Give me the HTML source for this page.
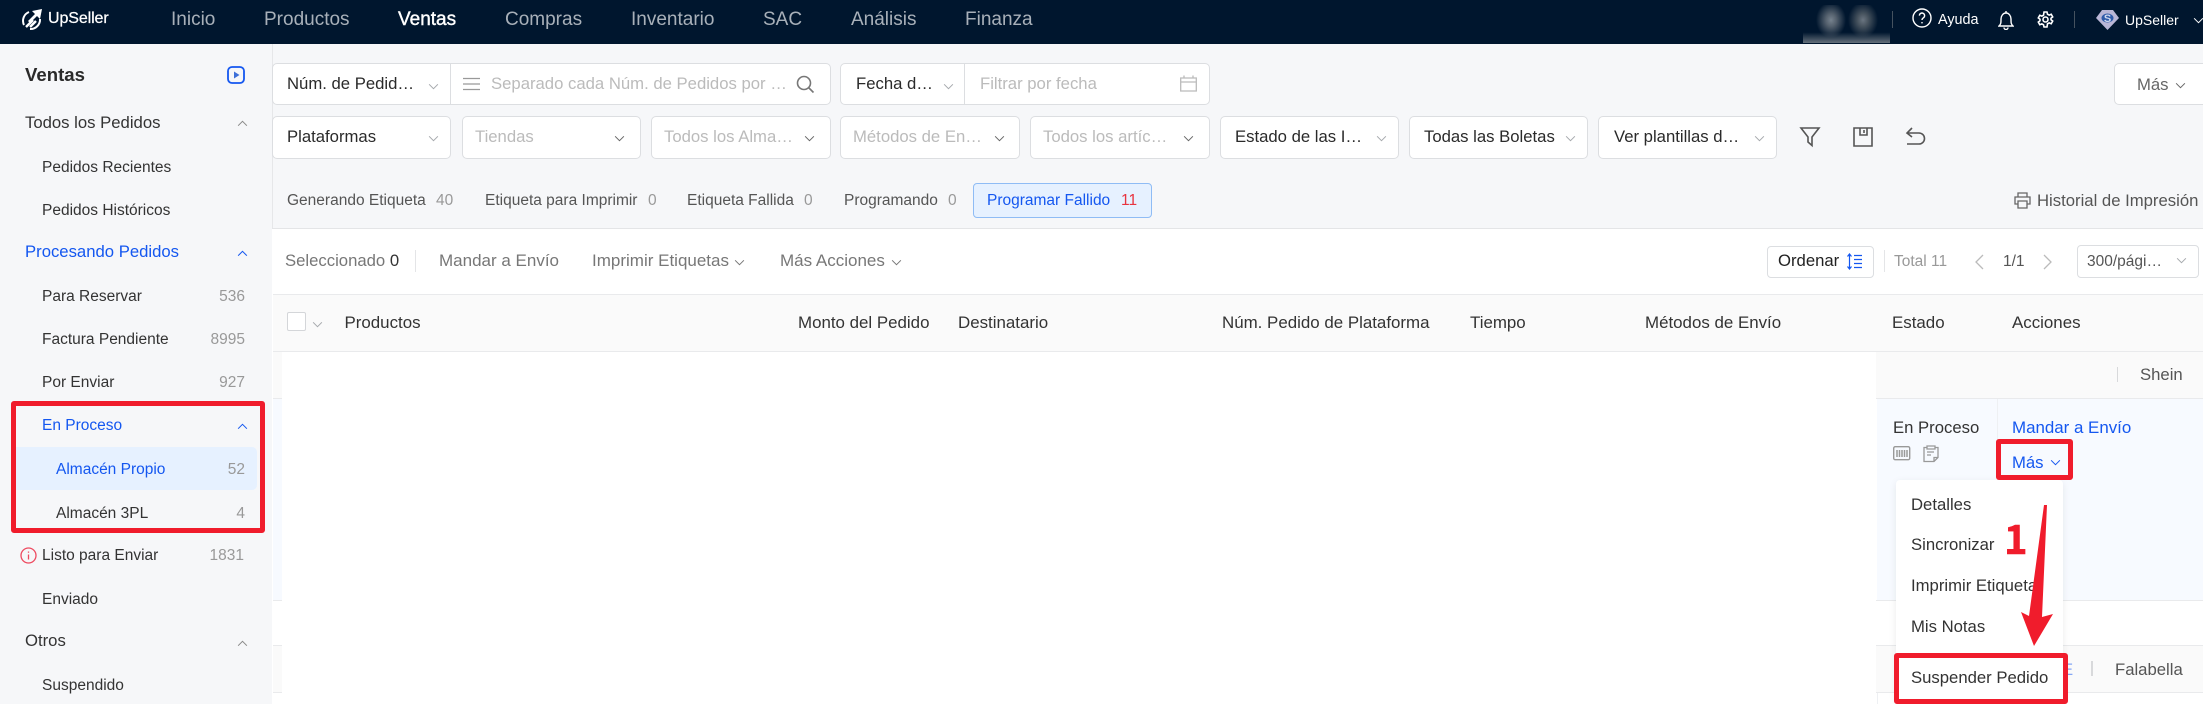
<!DOCTYPE html>
<html lang="es"><head><meta charset="utf-8"><title>UpSeller</title>
<style>
html,body{margin:0;padding:0;width:2203px;height:704px;overflow:hidden;background:#f6f7f9}
body{position:relative;font-family:"Liberation Sans",Arial,sans-serif;font-size:15.5px;color:#333}
div,svg,span.a{position:absolute}
.t{line-height:20px;height:20px;white-space:nowrap;margin-top:1px}
.f{font-size:16.7px}
.g{color:#999}.b{color:#1457f0}.d{color:#555}.p{color:#bbb}
.n{color:#a8b0b9;font-size:19px;line-height:24px;height:24px;top:8px;white-space:nowrap;position:absolute}
.w{color:#fff}
.box{background:#fff;border:1px solid #dcdee1;border-radius:5px;box-sizing:border-box}
.ln{height:1px;background:#e9eaec}
.c{fill:none;stroke:#a6a9ad;stroke-width:1.2;width:11px;height:7px;overflow:visible}
.i{fill:none;stroke:#555;stroke-width:1.6;overflow:visible}
</style></head><body>
<svg width="0" height="0" style="left:0;top:0"><defs><symbol id="ch" viewBox="0 0 12 8"><path d="M1 1.500 6 6.500 11 1.500"/></symbol><symbol id="up" viewBox="0 0 12 8"><path d="M1 6.500 6 1.500 11 6.500"/></symbol></defs></svg>

<!-- top bar -->
<div style="left:0;top:0;width:2203px;height:44px;background:#00162e"></div>
<svg style="left:21px;top:8px;fill:none;stroke:#fff;stroke-width:2" width="24" height="23" viewBox="0 0 24 23"><path d="M8 4A9.500 9.500 0 0 0 3 17"/><path d="M19 11A9.500 9.500 0 0 1 9 21"/><path fill="#fff" stroke="none" d="M21 1 19 11 16 8 9 15 7 13 14 6 11 3Z"/><path stroke-width="2.400" d="M12 12 5 19M15 13 9 19"/></svg>
<div class="t w" style="left:48px;top:8px;font-size:16px;letter-spacing:-.1px;-webkit-text-stroke:.25px #fff">UpSeller</div>
<span class="n" style="left:171px">Inicio</span>
<span class="n" style="left:264px">Productos</span>
<span class="n w" style="left:398px;color:#fff;-webkit-text-stroke:.4px #fff">Ventas</span>
<span class="n" style="left:505px">Compras</span>
<span class="n" style="left:631px">Inventario</span>
<span class="n" style="left:763px">SAC</span>
<span class="n" style="left:851px">Análisis</span>
<span class="n" style="left:965px">Finanza</span>

<div style="left:1803px;top:5px;width:87px;height:38px;background:radial-gradient(ellipse 15px 18px at 28px 15px,#76828e 0,#55616e 35%,rgba(0,22,46,0) 100%),radial-gradient(ellipse 15px 18px at 60px 15px,#6a7581 0,#48545f 35%,rgba(0,22,46,0) 100%),linear-gradient(#00162e 0,#00162e 72%,#65707b 100%)"></div>
<div style="left:1892px;top:11px;width:1px;height:17px;background:#45525f"></div>
<svg style="left:1912px;top:8px;fill:none;stroke:#fff;stroke-width:1.400" width="20" height="20" viewBox="0 0 20 20"><circle cx="10" cy="10" r="9"/><path d="M7.400 7.600a2.600 2.600 0 1 1 4 2.200c-.9.6-1.400 1-1.400 2.200"/><path d="M10 14v1.400"/></svg>
<div class="t w" style="left:1938px;top:9px;font-size:14.400px">Ayuda</div>
<svg style="left:1998px;top:10px;fill:none;stroke:#fff;stroke-width:1.400" width="16" height="20" viewBox="0 0 16 20"><path d="M1 16h14c-2-2-2-3-2-7 0-3-2-6-5-6S3 6 3 9c0 4 0 5-2 7Z"/><path d="M8 1v2M6 17.500a2 2 0 0 0 4 0"/></svg>
<svg style="left:2037px;top:11px;fill:none;stroke:#fff;stroke-width:1.600" width="17" height="17" viewBox="0 0 17 17"><circle cx="8.500" cy="8.500" r="2.500"/><path d="M7 1h3l.5 2.200 1.700.9 2-.8 1.500 2.600-1.700 1.400v1.400l1.700 1.400-1.500 2.600-2-.8-1.700.9L10 16H7l-.5-2.200-1.700-.9-2 .8L1.300 11.100 3 9.700V8.300L1.300 6.900l1.500-2.600 2 .8 1.700-.9Z"/></svg>
<div style="left:2074px;top:11px;width:1px;height:17px;background:#45525f"></div>
<svg style="left:2096px;top:9px" width="23" height="21" viewBox="0 0 23 21"><path fill="#b9b6d6" d="M6 1h11l6 8-11.500 12L0 9Z"/><ellipse cx="11.500" cy="9" rx="6" ry="4.500" fill="#2f5aa8"/><text x="11.500" y="13" font-size="11" font-weight="bold" text-anchor="middle" fill="#cfd8ee" font-family="Liberation Sans">S</text></svg>
<div class="t w" style="left:2125px;top:9px;font-size:14px">UpSeller</div>
<svg class="c" style="left:2193px;top:17px;stroke:#fff"><use href="#ch"/></svg>

<!-- sidebar -->
<div style="left:272px;top:44px;width:1px;height:660px;background:#e6e7e9"></div>
<div class="t" style="left:25px;top:64px;font-size:18.600px;font-weight:bold;color:#2a2a2a">Ventas</div>
<svg style="left:227px;top:66px" width="18" height="18" viewBox="0 0 18 18"><rect x="1" y="1" width="16" height="16" rx="4" fill="none" stroke="#1457f0" stroke-width="1.800"/><path d="M7 5.500v7l5.500-3.500Z" fill="#3d6fd8"/></svg>

<div class="t f" style="left:25px;top:112px">Todos los Pedidos</div>
<svg class="c" style="left:237px;top:120px;stroke:#888"><use href="#up"/></svg>
<div class="t" style="left:42px;top:157px">Pedidos Recientes</div>
<div class="t" style="left:42px;top:200px">Pedidos Históricos</div>
<div class="t b f" style="left:25px;top:241px">Procesando Pedidos</div>
<svg class="c" style="left:237px;top:250px;stroke:#1457f0"><use href="#up"/></svg>
<div class="t" style="left:42px;top:286px">Para Reservar</div><div class="t g" style="right:1958px;top:286px">536</div>
<div class="t" style="left:42px;top:329px">Factura Pendiente</div><div class="t g" style="right:1958px;top:329px">8995</div>
<div class="t" style="left:42px;top:372px">Por Enviar</div><div class="t g" style="right:1958px;top:372px">927</div>
<div class="t b" style="left:42px;top:415px">En Proceso</div>
<svg class="c" style="left:237px;top:423px;stroke:#1457f0"><use href="#up"/></svg>
<div style="left:16px;top:447px;width:241px;height:43px;background:#e6f1ff;border-radius:0 5px 5px 0"></div>
<div class="t b" style="left:56px;top:459px">Almacén Propio</div><div class="t g" style="right:1958px;top:459px">52</div>
<div class="t" style="left:56px;top:503px">Almacén 3PL</div><div class="t g" style="right:1958px;top:503px">4</div>
<svg style="left:20px;top:547px;fill:none;stroke:#ee4a60;stroke-width:1.300" width="17" height="17" viewBox="0 0 17 17"><circle cx="8.500" cy="8.500" r="7.500"/><path d="M8.500 7.500v5M8.500 4.500v1.300"/></svg>
<div class="t" style="left:42px;top:545px">Listo para Enviar</div><div class="t g" style="right:1959px;top:545px">1831</div>
<div class="t" style="left:42px;top:589px">Enviado</div>
<div class="t f" style="left:25px;top:630px">Otros</div>
<svg class="c" style="left:237px;top:640px;stroke:#888"><use href="#up"/></svg>
<div class="t" style="left:42px;top:675px">Suspendido</div>

<!-- filters row 1 -->
<div class="box" style="left:272px;top:63px;width:559px;height:42px"></div>
<div style="left:450px;top:63px;width:1px;height:42px;background:#dcdee1"></div>
<div class="t f" style="left:287px;top:73px;color:#2a2a2a">Núm. de Pedid…</div>
<svg class="c" style="left:428px;top:83px"><use href="#ch"/></svg>
<svg style="left:463px;top:77px;fill:none;stroke:#999;stroke-width:1.200" width="18" height="14"><path d="M0 1.500h17M0 7h17M0 12.500h17"/></svg>
<div class="t p f" style="left:491px;top:73px">Separado cada Núm. de Pedidos por …</div>
<svg class="i" style="left:796px;top:75px;stroke:#777" width="19" height="19"><circle cx="8" cy="8" r="6.500"/><path d="M12.500 12.500 17.500 17.500"/></svg>
<div class="box" style="left:840px;top:63px;width:370px;height:42px"></div>
<div style="left:964px;top:63px;width:1px;height:42px;background:#dcdee1"></div>
<div class="t f" style="left:856px;top:73px;color:#2a2a2a">Fecha d…</div>
<svg class="c" style="left:943px;top:83px"><use href="#ch"/></svg>
<div class="t p f" style="left:980px;top:73px">Filtrar por fecha</div>
<svg style="left:1180px;top:75px;fill:none;stroke:#bbb;stroke-width:1.300" width="17" height="17"><path d="M.7 3h15.600v13H.7ZM.7 7h15.600M4 .5V3M13 .5V3"/></svg>
<div class="box" style="left:2114px;top:63px;width:100px;height:42px"></div>
<div class="t f" style="left:2137px;top:74px;color:#666">Más</div>
<svg class="c" style="left:2175px;top:82px;stroke:#666"><use href="#ch"/></svg>

<!-- filters row 2 -->
<div class="box" style="left:272px;top:116px;width:179px;height:43px"></div>
<div class="t f" style="left:287px;top:126px;color:#2a2a2a">Plataformas</div><svg class="c" style="left:428px;top:135px"><use href="#ch"/></svg>
<div class="box" style="left:462px;top:116px;width:179px;height:43px"></div>
<div class="t p f" style="left:475px;top:126px">Tiendas</div><svg class="c" style="left:614px;top:135px;stroke:#666"><use href="#ch"/></svg>
<div class="box" style="left:651px;top:116px;width:180px;height:43px"></div>
<div class="t p f" style="left:664px;top:126px">Todos los Alma…</div><svg class="c" style="left:804px;top:135px;stroke:#666"><use href="#ch"/></svg>
<div class="box" style="left:840px;top:116px;width:180px;height:43px"></div>
<div class="t p f" style="left:853px;top:126px">Métodos de En…</div><svg class="c" style="left:994px;top:135px;stroke:#666"><use href="#ch"/></svg>
<div class="box" style="left:1030px;top:116px;width:180px;height:43px"></div>
<div class="t p f" style="left:1043px;top:126px">Todos los artíc…</div><svg class="c" style="left:1183px;top:135px;stroke:#666"><use href="#ch"/></svg>
<div class="box" style="left:1220px;top:116px;width:179px;height:43px"></div>
<div class="t f" style="left:1235px;top:126px;color:#2a2a2a">Estado de las I…</div><svg class="c" style="left:1376px;top:135px"><use href="#ch"/></svg>
<div class="box" style="left:1409px;top:116px;width:179px;height:43px"></div>
<div class="t f" style="left:1424px;top:126px;color:#2a2a2a">Todas las Boletas</div><svg class="c" style="left:1565px;top:135px"><use href="#ch"/></svg>
<div class="box" style="left:1598px;top:116px;width:179px;height:43px"></div>
<div class="t f" style="left:1614px;top:126px;color:#2a2a2a">Ver plantillas d…</div><svg class="c" style="left:1754px;top:135px"><use href="#ch"/></svg>
<svg class="i" style="left:1800px;top:127px" width="20" height="20"><path d="M1 1h18L12 10v8.500L8 15V10Z"/></svg>
<svg class="i" style="left:1853px;top:127px" width="20" height="20"><path d="M1 1h18v18H1ZM7 1v7h7V1M11 3v3"/></svg>
<svg class="i" style="left:1906px;top:127px" width="20" height="20"><path d="M6 1 1 6l5 4M1 6h12a5.500 5.500 0 0 1 0 11H1"/></svg>

<!-- tabs -->
<div class="t d" style="left:287px;top:190px">Generando Etiqueta</div><div class="t g" style="left:436px;top:190px">40</div>
<div class="t d" style="left:485px;top:190px">Etiqueta para Imprimir</div><div class="t g" style="left:648px;top:190px">0</div>
<div class="t d" style="left:687px;top:190px">Etiqueta Fallida</div><div class="t g" style="left:804px;top:190px">0</div>
<div class="t d" style="left:844px;top:190px">Programando</div><div class="t g" style="left:948px;top:190px">0</div>
<div style="left:973px;top:183px;width:179px;height:35px;box-sizing:border-box;background:#e6f1ff;border:1px solid #8fbcf5;border-radius:4px"></div>
<div class="t b" style="left:987px;top:190px">Programar Fallido</div><div class="t" style="left:1121px;top:190px;color:#e8333f">11</div>
<svg class="i" style="left:2014px;top:192px;stroke:#666;stroke-width:1.300" width="17" height="17"><path d="M4 5V1h9v4M4 12H1V5h15v7h-3M4 9h9v7H4Z"/></svg>
<div class="t d f" style="left:2037px;top:190px">Historial de Impresión</div>

<!-- panel -->
<div style="left:272px;top:228px;width:1931px;height:476px;background:#fff;border-top:1px solid #e4e5e7;box-sizing:border-box"></div>
<div class="t f" style="left:285px;top:250px;color:#777">Seleccionado <span style="color:#333">0</span></div>
<div style="left:415px;top:250px;width:1px;height:22px;background:#e4e5e7"></div>
<div class="t" style="left:439px;top:250px;color:#777;font-size:17px">Mandar a Envío</div>
<div class="t" style="left:592px;top:250px;color:#777;font-size:17px">Imprimir Etiquetas</div><svg class="c" style="left:734px;top:259px;stroke:#777"><use href="#ch"/></svg>
<div class="t" style="left:780px;top:250px;color:#777;font-size:17px">Más Acciones</div><svg class="c" style="left:891px;top:259px;stroke:#777"><use href="#ch"/></svg>
<div class="box" style="left:1767px;top:246px;width:107px;height:32px;border-radius:4px"></div>
<div class="t f" style="left:1778px;top:250px;color:#222">Ordenar</div>
<svg style="left:1847px;top:253px;fill:none;stroke:#1457f0;stroke-width:1.200" width="16" height="17"><path d="M2.500 1v15M.5 3.500l2-2.500 2 2.500M.5 13.500l2 2.500 2-2.500M7 2.500h8M7 6.500h8M7 10.500h8M7 14.500h8"/></svg>
<div style="left:1884px;top:250px;width:1px;height:22px;background:#e4e5e7"></div>
<div class="t g" style="left:1894px;top:251px">Total 11</div>
<svg style="left:1974px;top:254px;fill:none;stroke:#bbb;stroke-width:1.300" width="10" height="16"><path d="M9 1 2 8l7 7"/></svg>
<div class="t d" style="left:2003px;top:251px">1/1</div>
<svg style="left:2043px;top:254px;fill:none;stroke:#bbb;stroke-width:1.300" width="10" height="16"><path d="M1 1l7 7-7 7"/></svg>
<div class="box" style="left:2077px;top:245px;width:122px;height:33px;border-radius:4px"></div>
<div class="t d" style="left:2087px;top:251px">300/pági…</div>
<svg class="c" style="left:2176px;top:257px"><use href="#ch"/></svg>

<!-- table header -->
<div style="left:273px;top:294px;width:1930px;height:58px;background:#fafafa;border-top:1px solid #e9eaec;border-bottom:1px solid #e9eaec;box-sizing:border-box"></div>
<div style="left:287px;top:312px;width:19px;height:19px;box-sizing:border-box;background:#fff;border:1px solid #d4d6d9;border-radius:2px"></div>
<svg class="c" style="left:312px;top:321px"><use href="#ch"/></svg>
<div class="t" style="left:344.500px;top:312px;font-size:16.900px">Productos</div>
<div class="t" style="left:798px;top:312px;font-size:16.900px">Monto del Pedido</div>
<div class="t" style="left:958px;top:312px;font-size:16.900px">Destinatario</div>
<div class="t" style="left:1222px;top:312px;font-size:16.900px">Núm. Pedido de Plataforma</div>
<div class="t" style="left:1470px;top:312px;font-size:16.900px">Tiempo</div>
<div class="t" style="left:1645px;top:312px;font-size:16.900px">Métodos de Envío</div>
<div class="t" style="left:1892px;top:312px;font-size:16.900px">Estado</div>
<div class="t" style="left:2012px;top:312px;font-size:16.900px">Acciones</div>

<!-- rows (left strip) -->
<div style="left:273px;top:352px;width:9px;height:46px;background:#fafafa"></div>
<div style="left:273px;top:399px;width:9px;height:201px;background:#f7faff"></div>
<div style="left:273px;top:646px;width:9px;height:46px;background:#fafafa"></div>
<div class="ln" style="left:273px;top:398px;width:9px"></div>
<div class="ln" style="left:273px;top:600px;width:9px"></div>
<div class="ln" style="left:273px;top:645px;width:9px"></div>
<div class="ln" style="left:273px;top:692px;width:9px"></div>
<div style="left:282px;top:352px;width:1594px;height:352px;background:#fff"></div>

<!-- rows (right strip) -->
<div style="left:1876px;top:352px;width:327px;height:46px;background:#fafafa"></div>
<div class="ln" style="left:1876px;top:398px;width:327px"></div>
<div style="left:2117px;top:367px;width:1px;height:15px;background:#d8d9db"></div>
<div class="t d f" style="left:2140px;top:364px">Shein</div>
<div style="left:1877px;top:399px;width:326px;height:201px;background:#f7faff"></div>
<div style="left:1997px;top:399px;width:1px;height:201px;background:#eef0f3"></div>
<div class="ln" style="left:1876px;top:600px;width:327px"></div>
<div class="ln" style="left:1876px;top:645px;width:327px"></div>
<div style="left:1876px;top:646px;width:327px;height:46px;background:#fafafa"></div>
<div class="ln" style="left:1876px;top:692px;width:327px"></div>
<div style="left:1877px;top:693px;width:1px;height:11px;background:#eef0f3"></div>
<div class="t b f" style="left:2062px;top:659px;opacity:.5">E</div>
<div style="left:2091px;top:661px;width:2px;height:15px;background:#d8d9db"></div>
<div class="t d f" style="left:2115px;top:659px">Falabella</div>

<div class="t f" style="left:1893px;top:417px">En Proceso</div>
<svg style="left:1893px;top:446px;fill:none;stroke:#999;stroke-width:1.400" width="18" height="15"><rect x=".7" y=".7" width="16" height="13" rx="1.500"/><path stroke-width="1.500" d="M4 4v7M6.500 4v7M9 4v7M11.500 4v7M14 4v7"/></svg>
<svg style="left:1923px;top:445px;fill:none;stroke:#999;stroke-width:1.300" width="16" height="18"><path d="M4 2.500H1v14h10l4-4v-10h-3M4 1h8v3H4ZM4 7h7M4 10h4M11 16.500v-4h4"/></svg>
<div class="t b" style="left:2012px;top:417px;font-size:16.900px">Mandar a Envío</div>
<div class="t b f" style="left:2012px;top:452px">Más</div>
<svg class="c" style="left:2050px;top:459px;stroke:#1457f0"><use href="#ch"/></svg>

<!-- dropdown -->
<div style="left:1896px;top:480px;width:167px;height:224px;background:#fff;border-radius:4px;box-shadow:0 2px 8px rgba(0,0,0,.08)"></div>
<div class="t f" style="left:1911px;top:494px">Detalles</div>
<div class="t f" style="left:1911px;top:534px">Sincronizar</div>
<div class="t f" style="left:1911px;top:575px">Imprimir Etiqueta</div>
<div class="t f" style="left:1911px;top:616px">Mis Notas</div>
<div class="t f" style="left:1911px;top:667px">Suspender Pedido</div>

<!-- annotations -->
<div style="left:11px;top:401px;width:254px;height:132px;box-sizing:border-box;border:5px solid #f01c2c;border-radius:3px"></div>
<div style="left:1996px;top:439px;width:77px;height:41px;box-sizing:border-box;border:5px solid #f01c2c;border-radius:3px"></div>
<div style="left:1894px;top:653px;width:174px;height:51px;box-sizing:border-box;border:5px solid #f01c2c;border-radius:3px"></div>
<div style="left:2004px;top:515px;font-size:40px;line-height:45px;font-family:'Noto Sans CJK SC','Liberation Sans',sans-serif;font-weight:bold;color:#f01c2c;-webkit-text-stroke:.5px #f01c2c">1</div>
<svg style="left:2015px;top:500px" width="45" height="150"><path fill="#f01c2c" d="M29 5H32L27 117 38 114 19 146 6 112 14 116Z"/></svg>
</body></html>
